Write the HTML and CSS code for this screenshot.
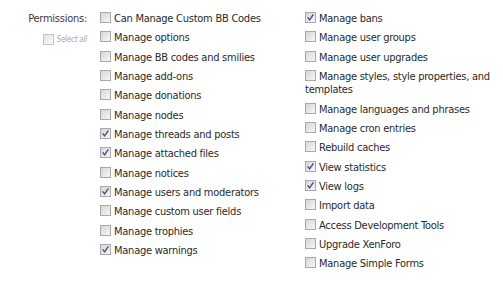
FILE: index.html
```html
<!DOCTYPE html>
<html>
<head>
<meta charset="utf-8">
<link rel="stylesheet" href="styles.css">
</head>
<body>
<div class="row">
  <div class="label-col">
    <div class="label">Permissions:</div>
    <label class="select-all"><span class="box"></span>Select all</label>
  </div>
  <div class="columns">
    <ul class="col">
      <li><label><span class="box"></span>Can Manage Custom BB Codes</label></li>
      <li><label><span class="box"></span>Manage options</label></li>
      <li><label><span class="box"></span>Manage BB codes and smilies</label></li>
      <li><label><span class="box"></span>Manage add-ons</label></li>
      <li><label><span class="box"></span>Manage donations</label></li>
      <li><label><span class="box"></span>Manage nodes</label></li>
      <li><label><span class="box checked"><svg viewBox="0 0 11 11" width="11" height="11"><path d="M2.6 5.4 L4.6 7.8 L8.4 2.4" fill="none" stroke="#3f5288" stroke-width="1.4"/></svg></span>Manage threads and posts</label></li>
      <li><label><span class="box checked"><svg viewBox="0 0 11 11" width="11" height="11"><path d="M2.6 5.4 L4.6 7.8 L8.4 2.4" fill="none" stroke="#3f5288" stroke-width="1.4"/></svg></span>Manage attached files</label></li>
      <li><label><span class="box"></span>Manage notices</label></li>
      <li><label><span class="box checked"><svg viewBox="0 0 11 11" width="11" height="11"><path d="M2.6 5.4 L4.6 7.8 L8.4 2.4" fill="none" stroke="#3f5288" stroke-width="1.4"/></svg></span>Manage users and moderators</label></li>
      <li><label><span class="box"></span>Manage custom user fields</label></li>
      <li><label><span class="box"></span>Manage trophies</label></li>
      <li><label><span class="box checked"><svg viewBox="0 0 11 11" width="11" height="11"><path d="M2.6 5.4 L4.6 7.8 L8.4 2.4" fill="none" stroke="#3f5288" stroke-width="1.4"/></svg></span>Manage warnings</label></li>
    </ul>
    <ul class="col right">
      <li><label><span class="box checked"><svg viewBox="0 0 11 11" width="11" height="11"><path d="M2.6 5.4 L4.6 7.8 L8.4 2.4" fill="none" stroke="#3f5288" stroke-width="1.4"/></svg></span>Manage bans</label></li>
      <li><label><span class="box"></span>Manage user groups</label></li>
      <li><label><span class="box"></span>Manage user upgrades</label></li>
      <li><label><span class="box"></span>Manage styles, style properties, and templates</label></li>
      <li><label><span class="box"></span>Manage languages and phrases</label></li>
      <li><label><span class="box"></span>Manage cron entries</label></li>
      <li><label><span class="box"></span>Rebuild caches</label></li>
      <li><label><span class="box checked"><svg viewBox="0 0 11 11" width="11" height="11"><path d="M2.6 5.4 L4.6 7.8 L8.4 2.4" fill="none" stroke="#3f5288" stroke-width="1.4"/></svg></span>View statistics</label></li>
      <li><label><span class="box checked"><svg viewBox="0 0 11 11" width="11" height="11"><path d="M2.6 5.4 L4.6 7.8 L8.4 2.4" fill="none" stroke="#3f5288" stroke-width="1.4"/></svg></span>View logs</label></li>
      <li><label><span class="box"></span>Import data</label></li>
      <li><label><span class="box"></span>Access Development Tools</label></li>
      <li><label><span class="box"></span>Upgrade XenForo</label></li>
      <li><label><span class="box"></span>Manage Simple Forms</label></li>
    </ul>
  </div>
</div>
</body>
</html>
```

FILE: styles.css
```css
html, body {
  margin: 0;
  padding: 0;
  background: #ffffff;
}

body {
  font-family: "DejaVu Sans Condensed", "DejaVu Sans", sans-serif;
  font-size: 11px;
  letter-spacing: -0.25px;
  color: #2a2a2a;
}

.row {
  display: flex;
  padding-top: 9px;
}

.label-col {
  width: 87px;
  display: flex;
  flex-direction: column;
  align-items: flex-end;
}

.label {
  line-height: 13.33px;
  padding: 3px 0;
  color: #3a3a3a;
}

.select-all {
  display: flex;
  align-items: center;
  font-size: 8px;
  font-style: italic;
  color: #a8a8a8;
  margin-top: 6px;
}

.select-all .box {
  margin-right: 3px;
  border-color: #c4c4c4;
  background: linear-gradient(135deg, #e2e2e2, #fafafa);
}

.columns {
  display: flex;
  margin-left: 13px;
}

.col {
  list-style: none;
  margin: 0;
  padding: 0;
  width: 205px;
}

.col.right {
  width: 195px;
}

.col li {
  line-height: 13.33px;
  padding: 3px 0;
}

.box {
  display: inline-block;
  box-sizing: border-box;
  width: 11px;
  height: 11px;
  border: 1px solid #a9a9a9;
  background: linear-gradient(135deg, #d6d6d6, #f7f7f7);
  vertical-align: -1px;
  margin-right: 3px;
  position: relative;
}

.box svg {
  display: block;
  margin: -1px 0 0 -1px;
}
```
